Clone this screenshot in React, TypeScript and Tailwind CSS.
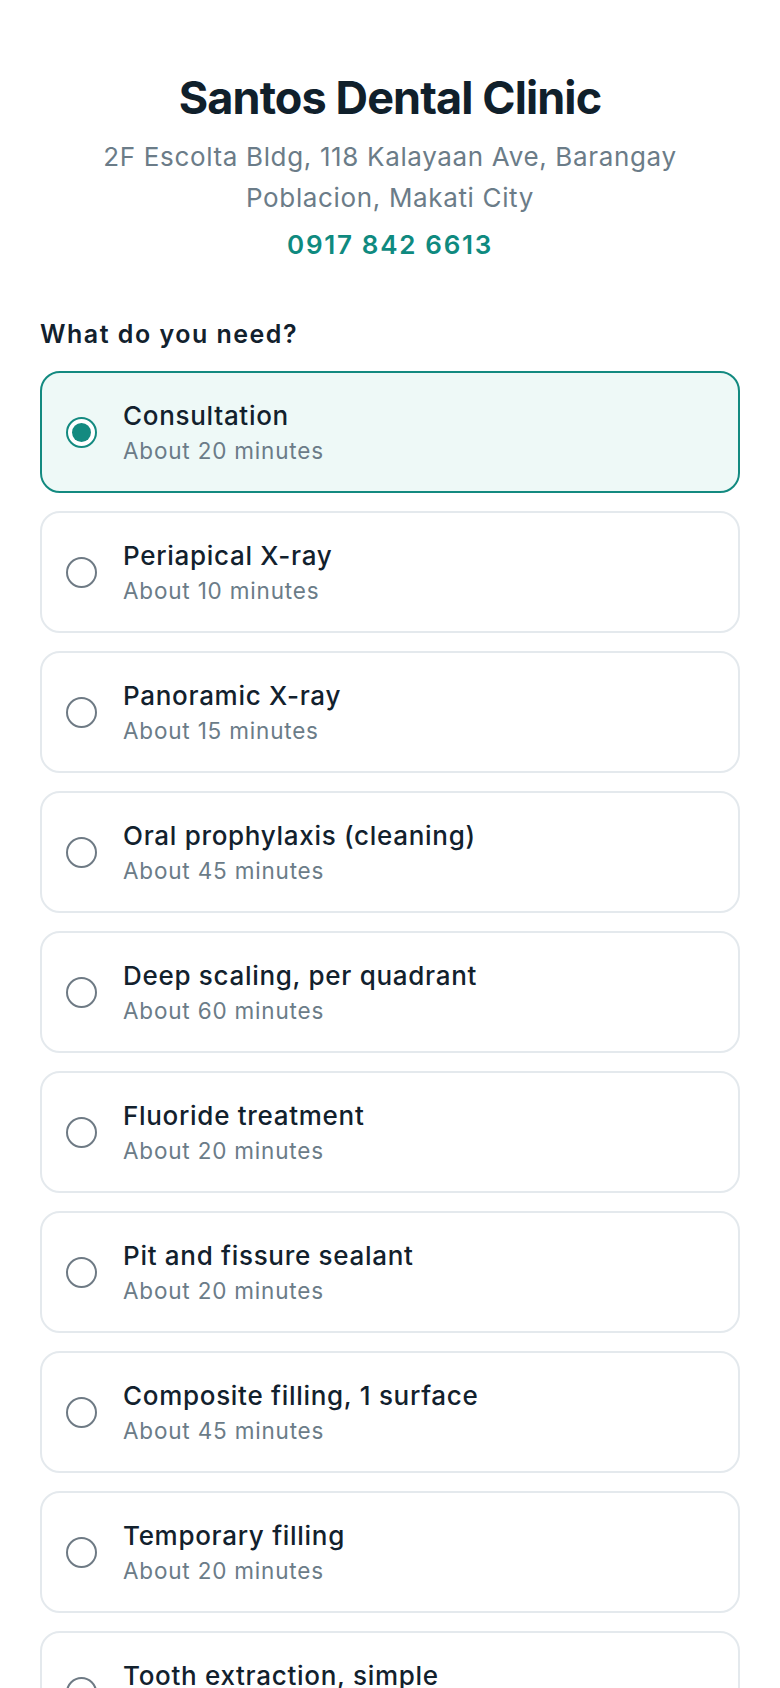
import { useState } from 'react'

type Service = {
  id: string
  name: string
  minutes: number
}

const services: Service[] = [
  { id: 'consult', name: 'Consultation', minutes: 20 },
  { id: 'periapical', name: 'Periapical X-ray', minutes: 10 },
  { id: 'panoramic', name: 'Panoramic X-ray', minutes: 15 },
  { id: 'prophylaxis', name: 'Oral prophylaxis (cleaning)', minutes: 45 },
  { id: 'scaling', name: 'Deep scaling, per quadrant', minutes: 60 },
  { id: 'fluoride', name: 'Fluoride treatment', minutes: 20 },
  { id: 'sealant', name: 'Pit and fissure sealant', minutes: 20 },
  { id: 'composite', name: 'Composite filling, 1 surface', minutes: 45 },
  { id: 'temporary', name: 'Temporary filling', minutes: 20 },
  { id: 'extraction', name: 'Tooth extraction, simple', minutes: 30 },
  { id: 'surgical', name: 'Surgical extraction', minutes: 60 },
]

export default function App() {
  const [selected, setSelected] = useState('consult')

  return (
    <div className="min-h-screen bg-white px-[40px] pt-[71px] pb-10 font-['Inter','Liberation_Sans',sans-serif] text-[#12212d]">
      {/* Clinic header */}
      <div className="text-center">
        <h1 className="text-[45px] leading-[54px] font-bold tracking-[-0.02em] text-[#10202b]">
          Santos Dental Clinic
        </h1>
        <p className="mx-auto mt-[11px] max-w-[640px] text-[26px] leading-[41px] tracking-[0.025em] text-[#6b7c88]">
          2F Escolta Bldg, 118 Kalayaan Ave, Barangay Poblacion, Makati City
        </p>
        <p className="mt-[7px] text-[26px] leading-[39px] font-semibold tracking-[0.065em] text-[#0f8a7f]">
          0917 842 6613
        </p>
      </div>

      {/* Service picker */}
      <div className="mt-[52px]">
        <h2 className="text-[25px] leading-[37px] font-semibold tracking-[0.06em] text-[#12212d]">
          What do you need?
        </h2>
        <div className="mt-[18px] flex flex-col gap-[18px]">
          {services.map(s => {
            const isSelected = s.id === selected
            return (
              <button
                key={s.id}
                onClick={() => setSelected(s.id)}
                className={`flex items-center gap-[26px] rounded-[20px] border-2 px-[24px] py-[24px] text-left ${
                  isSelected ? 'border-[#138a80] bg-[#eef9f7]' : 'border-[#e4e9ed] bg-white'
                }`}
              >
                <span
                  className={`flex h-[31px] w-[31px] shrink-0 items-center justify-center rounded-full border-[2.5px] bg-white ${
                    isSelected ? 'border-[#138a80]' : 'border-[#6e7a84]'
                  }`}
                >
                  {isSelected && <span className="h-[19px] w-[19px] rounded-full bg-[#138a80]" />}
                </span>
                <span className="flex flex-col">
                  <span className="text-[26px] leading-[37px] font-medium tracking-[0.027em] text-[#12212d]">
                    {s.name}
                  </span>
                  <span className="text-[22.5px] leading-[33px] tracking-[0.036em] text-[#6b7c88]">
                    About {s.minutes} minutes
                  </span>
                </span>
              </button>
            )
          })}
        </div>
      </div>
    </div>
  )
}
